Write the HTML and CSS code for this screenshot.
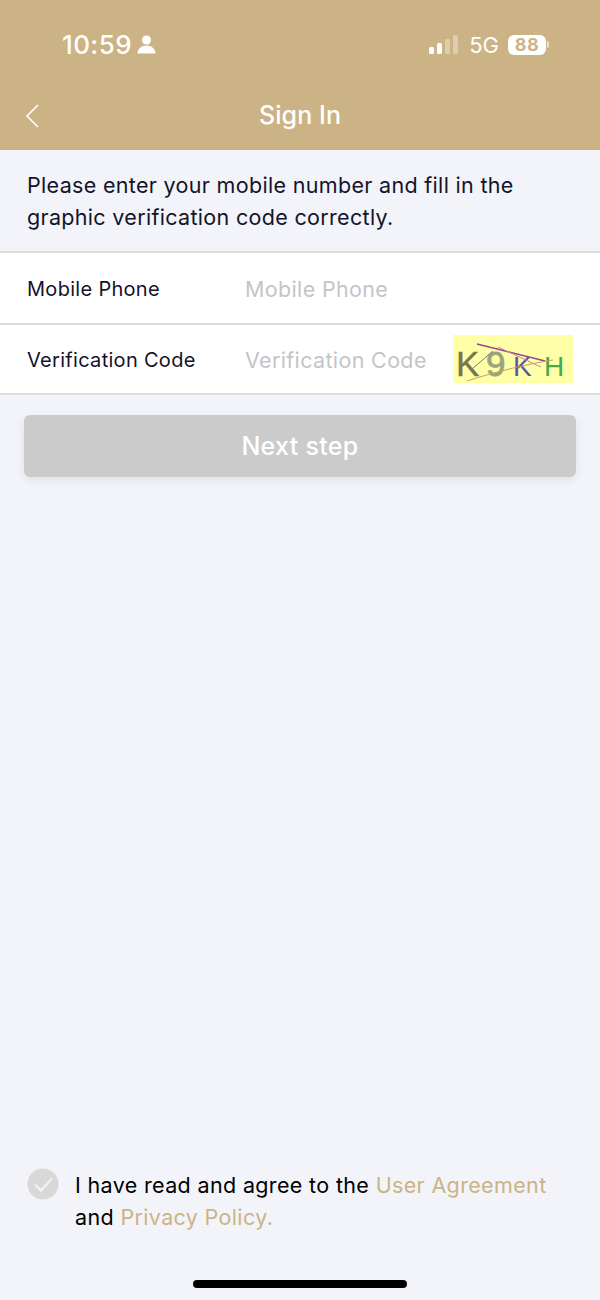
FILE: index.html
```html
<!DOCTYPE html>
<html lang="en">
<head>
    <meta charset="UTF-8">
    <meta name="viewport" content="width=device-width, initial-scale=1.0">
    <title>Sign In</title>
    <link rel="stylesheet" href="styles.css">
</head>
<body>
    <header class="cabecera">
        <div class="estado">
            <div class="estado-hora">
                <span class="hora">10:59</span>
                <svg class="icono-persona" width="18" height="18" viewBox="0 0 18 18">
                    <circle cx="9" cy="4.700" r="4.300" fill="#fff"/>
                    <path d="M0.500 17.500c0-4.500 3.800-7.500 8.500-7.500s8.500 3 8.500 7.500z" fill="#fff"/>
                </svg>
            </div>
            <div class="estado-red">
                <svg width="32" height="20" viewBox="0 0 32 20">
                    <rect x="1" y="12" width="5" height="7" rx="1.500" fill="#fff"/>
                    <rect x="9" y="8" width="5" height="11" rx="1.500" fill="#fff"/>
                    <rect x="17" y="4" width="5" height="15" rx="1.500" fill="#fff" opacity="0.35"/>
                    <rect x="25" y="0" width="5" height="19" rx="1.500" fill="#fff" opacity="0.35"/>
                </svg>
                <span class="red">5G</span>
                <div class="bateria">
                    <span class="bateria-nivel">88</span>
                    <span class="bateria-punta"></span>
                </div>
            </div>
        </div>
        <div class="barra">
            <svg class="volver" width="14" height="24" viewBox="0 0 14 24">
                <path d="M13 1 2 12l11 11" fill="none" stroke="#fff" stroke-width="1.600"/>
            </svg>
            <h1>Sign In</h1>
        </div>
    </header>

    <p class="aviso">Please enter your mobile number and fill in the graphic verification code correctly.</p>

    <div class="formulario">
        <div class="fila fila-telefono">
            <label class="etiqueta">Mobile Phone</label>
            <span class="campo">Mobile Phone</span>
        </div>
        <div class="fila fila-codigo">
            <label class="etiqueta">Verification Code</label>
            <span class="campo">Verification Code</span>
            <svg class="captcha" width="120" height="48" viewBox="0 0 120 48">
                <rect width="120" height="48" fill="#ffffa8"/>
                <text x="3" y="41" class="captcha-k">K</text>
                <text x="33" y="41" class="captcha-9">9</text>
                <text x="60" y="41" class="captcha-k2">K</text>
                <text x="91" y="41" class="captcha-h">H</text>
                <path d="M24 9 92 26" class="captcha-linea linea-morada"/>
                <path d="M14 46C45 36 75 29 100 25" class="captcha-linea linea-ocre"/>
                <path d="M19 34 40 16" class="captcha-linea linea-azul"/>
                <path d="M45 12 88 32" class="captcha-linea linea-rosa"/>
            </svg>
        </div>
    </div>

    <button class="boton">Next step</button>

    <div class="acuerdo">
        <svg class="marca" width="32" height="32" viewBox="0 0 32 32">
            <circle cx="16" cy="16" r="15.500" fill="#d8d8d8"/>
            <path d="M8 16.500l6 6L25 10.500" fill="none" stroke="#f1f1f1" stroke-width="2.400"/>
        </svg>
        <p>I have read and agree to the <a>User Agreement</a> and <a>Privacy Policy.</a></p>
    </div>

    <div class="barra-inicio"></div>
</body>
</html>
```

FILE: styles.css
```css
body {
    margin: 0;
    width: 600px;
    height: 1300px;
    display: flex;
    flex-direction: column;
    overflow: hidden;
    background-color: #f3f4f9;
    color: #000;
    font-family: 'Inter', 'Noto Sans', sans-serif;
}

.cabecera {
    height: 150px;
    flex-shrink: 0;
    background-color: #cbb385;
    color: #fff;
}

.estado {
    height: 81px;
    padding: 8px 51px 0 62px;
    box-sizing: border-box;
    display: flex;
    justify-content: space-between;
    align-items: center;
}

.estado-hora {
    display: flex;
    align-items: center;
    gap: 5px;
}

.hora {
    font-size: 26px;
    font-weight: 500;
    letter-spacing: 0.4px;
}

.icono-persona {
    width: 19px;
    height: 19px;
}

.estado-red {
    display: flex;
    align-items: center;
    gap: 9px;
}

.red {
    font-size: 22px;
}

.bateria {
    display: flex;
    align-items: center;
    gap: 1px;
}

.bateria-nivel {
    width: 38px;
    height: 20px;
    border-radius: 6px;
    background-color: #fff;
    color: #cbb385;
    font-size: 18px;
    font-weight: 700;
    line-height: 20px;
    letter-spacing: 0.5px;
    text-align: center;
}

.bateria-punta {
    width: 2px;
    height: 7px;
    border-radius: 0 2px 2px 0;
    background-color: rgba(255, 255, 255, 0.6);
}

.barra {
    position: relative;
    height: 69px;
    display: flex;
    justify-content: center;
    align-items: center;
}

.volver {
    position: absolute;
    left: 25px;
    top: 23px;
}

.barra h1 {
    margin: 0 0 1px;
    font-size: 25px;
    font-weight: 500;
    letter-spacing: 0.1px;
}

.aviso {
    margin: 0;
    height: 101px;
    padding: 19px 27px 0;
    box-sizing: border-box;
    font-size: 21.500px;
    line-height: 32px;
    letter-spacing: 0.32px;
    color: #13132b;
}

.formulario {
    background-color: #fff;
    border-top: 2px solid #dcdcdc;
}

.fila {
    display: flex;
    align-items: center;
    padding-left: 27px;
    box-sizing: border-box;
    border-bottom: 2px solid #dcdcdc;
    font-size: 20px;
    letter-spacing: 0.3px;
}

.fila-telefono {
    height: 72px;
}

.fila-codigo {
    height: 70px;
}

.etiqueta {
    width: 218px;
    padding-top: 2px;
    color: #13132b;
}

.campo {
    padding-top: 2px;
    color: #c4c4c9;
    font-size: 21.500px;
    letter-spacing: 0.35px;
}

.captcha {
    margin-left: auto;
    margin-right: 27px;
    flex-shrink: 0;
}

.captcha text {
    font-family: 'Liberation Sans', sans-serif;
    letter-spacing: 0;
}

.captcha-k {
    font-size: 35px;
    fill: #77774f;
    stroke: #77774f;
    stroke-width: 0.4px;
}

.captcha-9 {
    font-size: 35px;
    fill: #9aa57c;
    stroke: #9aa57c;
    stroke-width: 0.8px;
}

.captcha-k2 {
    font-size: 28px;
    fill: #5a55a5;
}

.captcha-h {
    font-size: 28px;
    fill: #43a84f;
}

.captcha-linea {
    fill: none;
    stroke-width: 1px;
}

.linea-morada {
    stroke: #9c3f93;
    stroke-width: 1.300px;
}

.linea-ocre {
    stroke: #c9a05a;
}

.linea-azul {
    stroke: #6f78a8;
}

.linea-rosa {
    stroke: #b98aa0;
}

.boton {
    display: block;
    margin: 20px 24px 0;
    height: 62px;
    flex-shrink: 0;
    border: none;
    border-radius: 6px;
    background-color: #cbcbcb;
    box-shadow: 0 3px 8px rgba(0, 0, 0, 0.08);
    color: #fff;
    font-family: inherit;
    font-size: 25px;
    font-weight: 500;
    letter-spacing: 0.3px;
}

.acuerdo {
    margin-top: auto;
    display: flex;
    align-items: flex-start;
    gap: 16px;
    padding: 0 27px;
}

.marca {
    flex-shrink: 0;
    margin-top: 18px;
}

.acuerdo p {
    margin: 0;
    padding-top: 19px;
    font-size: 21.500px;
    line-height: 32px;
    letter-spacing: 0.35px;
}

.acuerdo a {
    color: #cbb385;
}

.barra-inicio {
    width: 214px;
    height: 8px;
    margin: 47px auto 12px;
    flex-shrink: 0;
    border-radius: 4px;
    background-color: #000;
}
```
